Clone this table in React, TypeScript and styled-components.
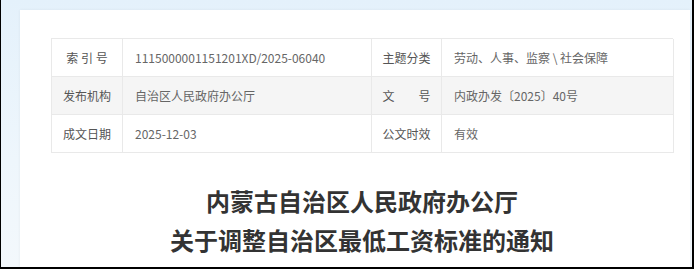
import React from "react";
import styled, { createGlobalStyle } from "styled-components";

const Global = createGlobalStyle`
  html, body { margin: 0; padding: 0; width: 694px; height: 269px; overflow: hidden; }
  body { font-family: "Noto Sans CJK SC", "Open Sans", sans-serif; }
  * { box-sizing: border-box; }
`;

const Frame = styled.div`
  width: 694px;
  height: 269px;
  border-left: 1px solid #000;
  border-right: 2px solid #000;
  border-bottom: 2px solid #000;
  background: linear-gradient(180deg, #e4f1fb 0%, #eef6fc 60%, #f3f8fc 100%);
  padding: 10px 2px 0 19px;
  display: flex;
  overflow: hidden;
`;

const Card = styled.div`
  flex: 1;
  background: #fff;
  box-shadow: 0 0 3px rgba(0, 0, 0, 0.06);
  padding: 28px 17px 0 31px;
  display: flex;
  flex-direction: column;
`;

const Table = styled.div`
  display: grid;
  grid-template-columns: 71px 249px 70px 232px;
  width: 622px;
  border-top: 1px solid #e9e9e9;
  border-left: 1px solid #e9e9e9;
`;

const Cell = styled.div<{ $label?: boolean; $shade?: boolean }>`
  height: 38px;
  display: flex;
  align-items: center;
  justify-content: ${(p) => (p.$label ? "center" : "flex-start")};
  padding: ${(p) => (p.$label ? "0" : "0 0 0 12px")};
  border-right: 1px solid #e9e9e9;
  border-bottom: 1px solid #e9e9e9;
  background: ${(p) => (p.$shade ? "#f5f5f5" : "#fff")};
  color: ${(p) => (p.$label ? "#555" : "#666")};
  font-size: 12px;
  white-space: pre;
`;

const Title = styled.h1`
  margin: 28px 0 0;
  width: 622px;
  text-align: center;
  font-size: 24px;
  line-height: 39px;
  font-weight: 700;
  color: #333;
`;

const rows: [string, string, string, string][] = [
  ["索 引 号", "1115000001151201XD/2025-06040", "主题分类", "劳动、人事、监察 \\ 社会保障"],
  ["发布机构", "自治区人民政府办公厅", "文　　号", "内政办发〔2025〕40号"],
  ["成文日期", "2025-12-03", "公文时效", "有效"],
];

export default function App() {
  return (
    <>
      <Global />
      <Frame>
        <Card>
          <Table>
            {rows.map((r, i) => (
              <React.Fragment key={i}>
                <Cell $label $shade={i === 1}>{r[0]}</Cell>
                <Cell $shade={i === 1}>{r[1]}</Cell>
                <Cell $label $shade={i === 1}>{r[2]}</Cell>
                <Cell $shade={i === 1}>{r[3]}</Cell>
              </React.Fragment>
            ))}
          </Table>
          <Title>
            内蒙古自治区人民政府办公厅
            <br />
            关于调整自治区最低工资标准的通知
          </Title>
        </Card>
      </Frame>
    </>
  );
}
